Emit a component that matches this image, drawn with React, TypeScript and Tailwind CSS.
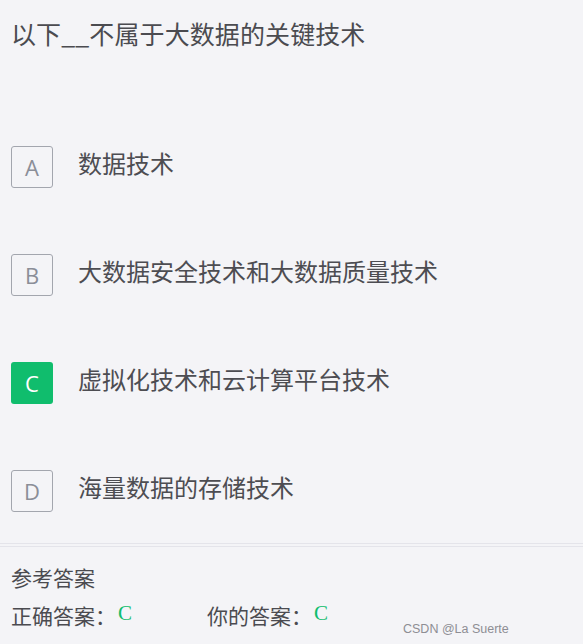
const options = [
  { key: "A", text: "数据技术" },
  { key: "B", text: "大数据安全技术和大数据质量技术" },
  { key: "C", text: "虚拟化技术和云计算平台技术", picked: true },
  { key: "D", text: "海量数据的存储技术" },
];

const cjk = { fontFamily: "'Noto Sans CJK SC', 'Noto Sans', sans-serif" };

export default function App() {
  return (
    <div className="relative h-[644px] w-[583px] overflow-hidden bg-[#f4f4f7] text-[#4b4b50]" style={cjk}>
      {/* Question */}
      <div className="px-[11px] pt-[15px] text-[25px] leading-[36px] tracking-[0.1px]">以下__不属于大数据的关键技术</div>

      {/* Options */}
      <div className="mt-[95px] flex flex-col gap-[66px] px-[11px]">
        {options.map((o) => (
          <div key={o.key} className="flex items-center">
            <div
              className={
                o.picked
                  ? "flex h-[42px] w-[42px] items-center justify-center rounded-[3px] bg-[#10bd6d] text-[22px] text-white"
                  : "flex h-[42px] w-[42px] items-center justify-center rounded-[3px] border border-[#a3a6ae] text-[22px] text-[#8b8e98]"
              }
              style={{ fontFamily: "'Open Sans', 'Noto Sans', sans-serif" }}
            >
              {o.key}
            </div>
            <div className="-mt-[8px] ml-[25px] text-[24px] leading-[36px] text-[#4d4d52]">{o.text}</div>
          </div>
        ))}
      </div>

      {/* Answer */}
      <div className="mt-[31px] h-[4px] border-y border-[#e4e4ea]" />
      <div className="px-[11px] pt-[12px] text-[21px] leading-[36px]">
        <div>参考答案</div>
        <div className="mt-[2px] flex">
          <div className="flex w-[196px] items-start">
            <span>正确答案：</span>
            <span className="-mt-[2px] ml-[2px] text-[#10bd6d]" style={{ fontFamily: "'Liberation Serif', serif" }}>C</span>
          </div>
          <div className="flex items-start">
            <span>你的答案：</span>
            <span className="-mt-[2px] ml-[2px] text-[#10bd6d]" style={{ fontFamily: "'Liberation Serif', serif" }}>C</span>
          </div>
        </div>
      </div>

      <div
        className="absolute left-[403px] top-[620px] text-[12.5px] leading-[18px] text-[#8e8e94]"
        style={{ fontFamily: "'Liberation Sans', Arial, sans-serif" }}
      >
        CSDN @La Suerte
      </div>
    </div>
  );
}
